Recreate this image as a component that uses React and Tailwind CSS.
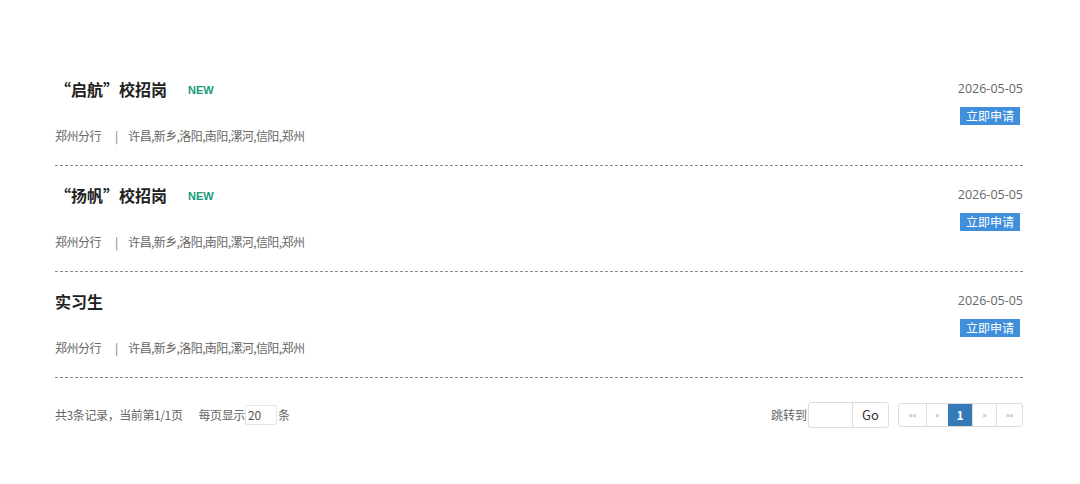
import React from "react";

const font = { fontFamily: '"Microsoft YaHei","Noto Sans CJK SC","Noto Sans",sans-serif' };

const items = [
  { title: "“启航”校招岗", isNew: true },
  { title: "“扬帆”校招岗", isNew: true },
  { title: "实习生", isNew: false },
];

function Item({ title, isNew }) {
  return (
    <div className="flex h-[106px] justify-between border-b border-dashed border-[#8a8a8a]">
      <div className="flex flex-col pt-[17px]">
        <div className="flex h-[24px] items-center">
          <span className="text-[16px] font-bold leading-[24px] text-[#222]">{title}</span>
          {isNew && (
            <span className="ml-[21px] mt-[1px] text-[11px] font-bold leading-[14px] text-[#179a7c]" style={{ fontFamily: '"Liberation Sans",Arial,sans-serif' }}>
              NEW
            </span>
          )}
        </div>
        <div className="mt-[26px] flex h-[18px] items-center text-[12px] leading-[18px] text-[#666]">
          <span className="tracking-[-0.5px]">郑州分行</span>
          <span className="ml-[14px] mr-[10px] text-[#777]">|</span>
          <span className="tracking-[-0.6px]">许昌,新乡,洛阳,南阳,漯河,信阳,郑州</span>
        </div>
      </div>
      <div className="flex flex-col items-end pt-[20px]">
        <div className="text-[12.5px] leading-[18px] text-[#666]" style={{ fontFamily: '"Open Sans","Noto Sans",sans-serif' }}>
          2026-05-05
        </div>
        <div className="mr-[3px] mt-[9px] flex h-[18px] w-[60px] items-center justify-center bg-[#3f8fdb] text-[12px] leading-[18px] text-white">
          立即申请
        </div>
      </div>
    </div>
  );
}

export default function App() {
  return (
    <div className="h-[484px] w-[1080px] bg-white" style={font}>
      <div className="ml-[55px] w-[968px] pt-[60px]">
        {items.map((it) => (
          <Item key={it.title} {...it} />
        ))}
        <div className="mt-[24px] flex items-center justify-between">
          <div className="flex items-center text-[12px] text-[#666]">
            <span className="tracking-[-0.4px]">共3条记录，当前第1/1页</span>
            <span className="ml-[16px] tracking-[-0.4px]">每页显示</span>
            <div className="flex h-[20px] w-[32px] items-center rounded-[2px] border border-[#e5e5e5] pl-[2px] text-[12px] text-[#555]">
              20
            </div>
            <span className="ml-[1px]">条</span>
          </div>
          <div className="flex items-center">
            <span className="text-[12px] text-[#666]">跳转到</span>
            <div className="ml-[1px] flex h-[26px] items-stretch rounded-[3px] border border-[#ddd]">
              <div className="w-[43px]" />
              <div className="flex w-[36px] items-center justify-center border-l border-[#ddd] text-[13px] text-[#333]">
                Go
              </div>
            </div>
            <div className="ml-[9px] flex h-[24px] items-stretch overflow-hidden rounded-[3px] border border-[#ddd] text-[8px] text-[#999]">
              <div className="flex w-[27px] items-center justify-center">««</div>
              <div className="flex w-[22px] items-center justify-center border-l border-[#ddd]">«</div>
              <div className="flex w-[24px] items-center justify-center bg-[#337ab7] text-[12px] font-bold text-white">1</div>
              <div className="flex w-[24px] items-center justify-center border-l border-[#ddd]">»</div>
              <div className="flex w-[26px] items-center justify-center border-l border-[#ddd]">»»</div>
            </div>
          </div>
        </div>
      </div>
    </div>
  );
}
